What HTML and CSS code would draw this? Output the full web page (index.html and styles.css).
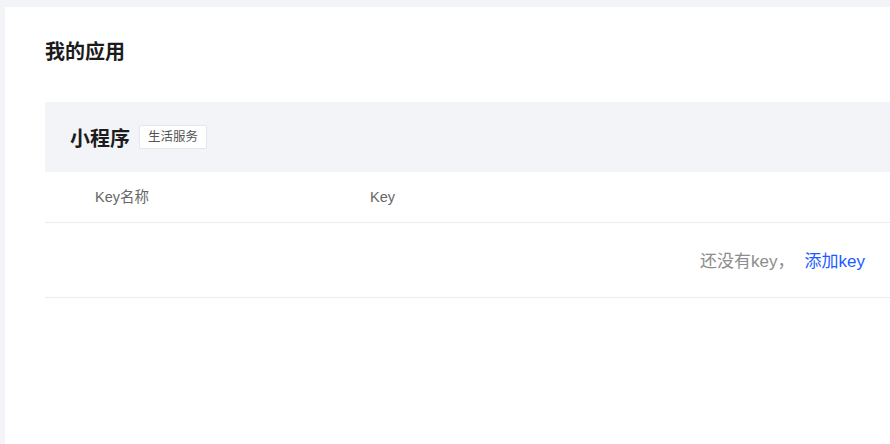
FILE: index.html
```html
<!DOCTYPE html>
<html lang="zh-CN">
<head>
<meta charset="utf-8">
<title>我的应用</title>
<link rel="stylesheet" href="styles.css">
</head>
<body>
<div class="page">
  <h1 class="title">我的应用</h1>
  <section class="app">
    <div class="app-head">
      <span class="app-name">小程序</span>
      <span class="tag">生活服务</span>
    </div>
    <div class="row row-head">
      <div class="cell cell-name">Key名称</div>
      <div class="cell cell-key">Key</div>
    </div>
    <div class="row row-empty">
      <span class="empty-text">还没有key，</span>
      <a class="add-link" href="#">添加key</a>
    </div>
  </section>
</div>
</body>
</html>
```

FILE: styles.css
```css
* { box-sizing: border-box; }
html, body {
  margin: 0;
  height: 100%;
}
body {
  background: #f3f4f8;
  font-family: "Liberation Sans", "Noto Sans CJK SC", sans-serif;
  color: #1f2329;
  padding: 7px 0 0 5px;
  overflow: hidden;
}
.page {
  background: #fff;
  min-height: 100%;
  padding: 33px 0 0 40px;
}
.title {
  margin: 0;
  font-size: 20px;
  line-height: 24px;
  font-weight: 700;
  color: #1c1c1c;
}
.app {
  margin-top: 38px;
}
.app-head {
  height: 70px;
  background: #f3f4f8;
  display: flex;
  align-items: center;
  padding-left: 25px;
}
.app-name {
  font-size: 20px;
  font-weight: 700;
  color: #1c1c1c;
}
.tag {
  margin-left: 9px;
  height: 24px;
  line-height: 22px;
  padding: 0 8px;
  font-size: 12.5px;
  color: #555;
  background: #fff;
  border: 1px solid #e4e6eb;
  border-radius: 2px;
}
.row {
  display: flex;
  align-items: center;
  border-bottom: 1px solid #ececec;
}
.row-head {
  height: 51px;
  font-size: 14.5px;
  line-height: 20px;
  color: #666;
}
.cell-name {
  width: 325px;
  padding-left: 50px;
}
.row-empty {
  height: 75px;
  justify-content: flex-end;
  padding-right: 25px;
  font-size: 17px;
  padding-bottom: 2px;
}
.empty-text {
  color: #8c8c8c;
}
.add-link {
  margin-left: 10px;
  color: #1a5cff;
  text-decoration: none;
}
```
